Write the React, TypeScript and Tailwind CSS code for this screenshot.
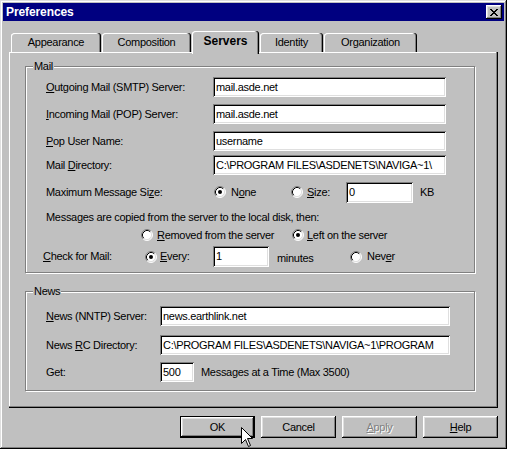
import React from "react";

function Radio({ checked }: { checked?: boolean }) {
  return (
    <svg width="12" height="12" viewBox="0 0 12 12" className="shrink-0 block">
      <circle cx="6" cy="6" r="5" fill="#fff" />
      <path d="M2.11 9.89 A5.5 5.5 0 0 1 9.89 2.11" fill="none" stroke="#808080" strokeWidth="1" />
      <path d="M9.89 2.11 A5.5 5.5 0 0 1 2.11 9.89" fill="none" stroke="#fff" strokeWidth="1" />
      <path d="M2.82 9.18 A4.5 4.5 0 0 1 9.18 2.82" fill="none" stroke="#000" strokeWidth="1" />
      <path d="M9.18 2.82 A4.5 4.5 0 0 1 2.82 9.18" fill="none" stroke="#dfdfdf" strokeWidth="1" />
      {checked && <circle cx="6" cy="6" r="2" fill="#000" />}
    </svg>
  );
}

function Field({ className, value }: { className: string; value: string }) {
  return (
    <div
      className={
        "shrink-0 bg-white shadow-[inset_1px_1px_#808080,inset_-1px_-1px_#fff,inset_2px_2px_#000,inset_-2px_-2px_#dfdfdf] pl-[3px] pr-[2px] flex items-center overflow-hidden whitespace-nowrap " +
        className
      }
    >
      {value}
    </div>
  );
}

function Tab({ label, w, selected }: { label: string; w: string; selected?: boolean }) {
  if (selected) {
    return (
      <div
        className={
          "relative z-10 -mb-[2px] h-[23px] pb-[3px] rounded-t-[3px] bg-[#c0c0c0] flex items-center justify-center font-bold text-[12px] tracking-[0px] shadow-[inset_-1px_0_#000,inset_-2px_0_#808080,inset_1px_1px_#fff] " +
          w
        }
      >
        {label}
      </div>
    );
  }
  return (
    <div
      className={
        "h-[19px] rounded-t-[3px] bg-[#c0c0c0] flex items-center justify-center shadow-[inset_-1px_0_#000,inset_-2px_0_#808080,inset_1px_1px_#fff] " +
        w
      }
    >
      {label}
    </div>
  );
}

const mailPath = "C:\\PROGRAM FILES\\ASDENETS\\NAVIGA~1\\";
const newsPath = "C:\\PROGRAM FILES\\ASDENETS\\NAVIGA~1\\PROGRAM";

export default function App() {
  return (
    <div className="relative w-[507px] h-[449px] bg-[#c0c0c0] p-[3px] font-['Liberation_Sans',Arial,sans-serif] text-[11px] tracking-[-0.3px] text-black shadow-[inset_-1px_-1px_#000,inset_1px_1px_#dfdfdf,inset_-2px_-2px_#808080,inset_2px_2px_#fff] overflow-hidden select-none">
      {/* Title bar */}
      <div className="h-[18px] bg-[#000080] flex items-center pl-[3px] pr-[2px]">
        <span className="text-white font-bold text-[12px] tracking-[-0.1px]">Preferences</span>
        <div className="ml-auto w-[16px] h-[14px] bg-[#c0c0c0] flex items-center justify-center shadow-[inset_-1px_-1px_#000,inset_1px_1px_#fff,inset_-2px_-2px_#808080,inset_2px_2px_#dfdfdf]">
          <svg width="8" height="7" viewBox="0 0 8 7" shapeRendering="crispEdges" className="block">
            <path
              d="M0 0h2v1H0zM6 0h2v1H6zM1 1h2v1H1zM5 1h2v1H5zM2 2h4v1H2zM3 3h2v1H3zM2 4h4v1H2zM1 5h2v1H1zM5 5h2v1H5zM0 6h2v1H0zM6 6h2v1H6z"
              fill="#000"
            />
          </svg>
        </div>
      </div>

      {/* Tabs + panel */}
      <div className="mx-[6px] mt-[10px]">
        <div className="h-[21px] flex items-end gap-[1px] pl-[2px]">
          <Tab label="Appearance" w="w-[90px]" />
          <Tab label="Composition" w="w-[89px]" />
          <Tab label="Servers" w="w-[67px]" selected />
          <Tab label="Identity" w="w-[63px]" />
          <Tab label="Organization" w="w-[93px]" />
        </div>
        <div className="h-[356px] pt-[14px] pl-[16px] shadow-[inset_-1px_-1px_#000,inset_-2px_-2px_#808080,inset_1px_1px_#fff]">
          {/* Mail group */}
          <div className="relative w-[450px] h-[207px] border border-[#808080] shadow-[inset_1px_1px_#fff,1px_1px_#fff] pt-[10px] pl-[20px]">
            <span className="absolute -top-[8px] left-[7px] px-[1px] bg-[#c0c0c0] leading-[14px]">Mail</span>
            <div className="flex items-center h-[20px]">
              <span className="w-[167px] shrink-0">
                <u>O</u>utgoing Mail (SMTP) Server:
              </span>
              <Field className="w-[233px] h-[20px]" value="mail.asde.net" />
            </div>
            <div className="flex items-center h-[20px] mt-[7px]">
              <span className="w-[167px] shrink-0">
                <u>I</u>ncoming Mail (POP) Server:
              </span>
              <Field className="w-[233px] h-[20px]" value="mail.asde.net" />
            </div>
            <div className="flex items-center h-[20px] mt-[7px]">
              <span className="w-[167px] shrink-0">
                <u>P</u>op User Name:
              </span>
              <Field className="w-[233px] h-[20px]" value="username" />
            </div>
            <div className="flex items-center h-[20px] mt-[4px]">
              <span className="w-[167px] shrink-0">
                Mail <u>D</u>irectory:
              </span>
              <Field className="w-[233px] h-[20px]" value={mailPath} />
            </div>
            <div className="flex items-center h-[20px] mt-[7px]">
              <span className="w-[167px] shrink-0">
                Maximum Message Si<u>z</u>e:
              </span>
              <div className="flex items-center w-[77px] gap-[5px] ml-[1px] shrink-0">
                <Radio checked />
                <span>
                  N<u>o</u>ne
                </span>
              </div>
              <div className="flex items-center w-[55px] gap-[4px] shrink-0">
                <Radio />
                <span>
                  <u>S</u>ize:
                </span>
              </div>
              <Field className="w-[67px] h-[21px]" value="0" />
              <span className="ml-[7px]">KB</span>
            </div>
            <div className="flex items-center h-[16px] mt-[7px]">
              Messages are copied from the server to the local disk, then:
            </div>
            <div className="flex items-center h-[16px] mt-[2px] pl-[95px]">
              <div className="flex items-center w-[151px] gap-[4px] shrink-0">
                <Radio />
                <span>
                  <u>R</u>emoved from the server
                </span>
              </div>
              <div className="flex items-center gap-[3px]">
                <Radio checked />
                <span>
                  <u>L</u>eft on the server
                </span>
              </div>
            </div>
            <div className="flex items-center h-[21px] mt-[3px] -ml-[3px]">
              <span className="w-[102px] shrink-0">
                <u>C</u>heck for Mail:
              </span>
              <div className="flex items-center w-[68px] gap-[3px] shrink-0">
                <Radio checked />
                <span>
                  <u>E</u>very:
                </span>
              </div>
              <Field className="w-[56px] h-[21px]" value="1" />
              <span className="w-[81px] pl-[8px] shrink-0 pt-[3px]">minutes</span>
              <div className="flex items-center gap-[5px]">
                <Radio />
                <span>
                  Nev<u>e</u>r
                </span>
              </div>
            </div>
          </div>

          {/* News group */}
          <div className="relative mt-[18px] w-[450px] h-[100px] border border-[#808080] shadow-[inset_1px_1px_#fff,1px_1px_#fff] pt-[14px] pl-[20px]">
            <span className="absolute -top-[8px] left-[7px] px-[1px] bg-[#c0c0c0] leading-[14px]">News</span>
            <div className="flex items-center h-[20px]">
              <span className="w-[114px] shrink-0">
                <u>N</u>ews (NNTP) Server:
              </span>
              <Field className="w-[290px] h-[20px]" value="news.earthlink.net" />
            </div>
            <div className="flex items-center h-[20px] mt-[9px]">
              <span className="w-[114px] shrink-0">
                News <u>R</u>C Directory:
              </span>
              <Field className="w-[290px] h-[20px]" value={newsPath} />
            </div>
            <div className="flex items-center h-[20px] mt-[7px]">
              <span className="w-[114px] shrink-0">Get:</span>
              <Field className="w-[34px] h-[20px]" value="500" />
              <span className="ml-[7px]">Messages at a Time (Max 3500)</span>
            </div>
          </div>
        </div>
      </div>

      {/* Buttons */}
      <div className="flex justify-end gap-[6px] mt-[8px] mr-[6px]">
        <div className="w-[75px] h-[22px] border border-black flex items-center justify-center shadow-[inset_-1px_-1px_#000,inset_1px_1px_#fff,inset_-2px_-2px_#808080,inset_2px_2px_#dfdfdf]">
          OK
        </div>
        <div className="w-[75px] h-[22px] flex items-center justify-center shadow-[inset_-1px_-1px_#000,inset_1px_1px_#fff,inset_-2px_-2px_#808080,inset_2px_2px_#dfdfdf]">
          Cancel
        </div>
        <div className="w-[75px] h-[22px] flex items-center justify-center text-[#808080] [text-shadow:1px_1px_0_#fff] shadow-[inset_-1px_-1px_#000,inset_1px_1px_#fff,inset_-2px_-2px_#808080,inset_2px_2px_#dfdfdf]">
          <span>
            <u>A</u>pply
          </span>
        </div>
        <div className="w-[75px] h-[22px] flex items-center justify-center shadow-[inset_-1px_-1px_#000,inset_1px_1px_#fff,inset_-2px_-2px_#808080,inset_2px_2px_#dfdfdf]">
          <span>
            <u>H</u>elp
          </span>
        </div>
      </div>

      {/* Mouse cursor */}
      <svg
        width="13"
        height="21"
        viewBox="0 0 13 21"
        className="absolute left-[241px] top-[427px] pointer-events-none"
      >
        <path
          d="M0.5 0.5 L0.5 16.5 L4.5 12.5 L7.5 19.5 L9.5 18.5 L6.5 11.5 L11.5 11.5 Z"
          fill="#fff"
          stroke="#000"
          strokeWidth="1"
          strokeLinejoin="miter"
        />
      </svg>
    </div>
  );
}
